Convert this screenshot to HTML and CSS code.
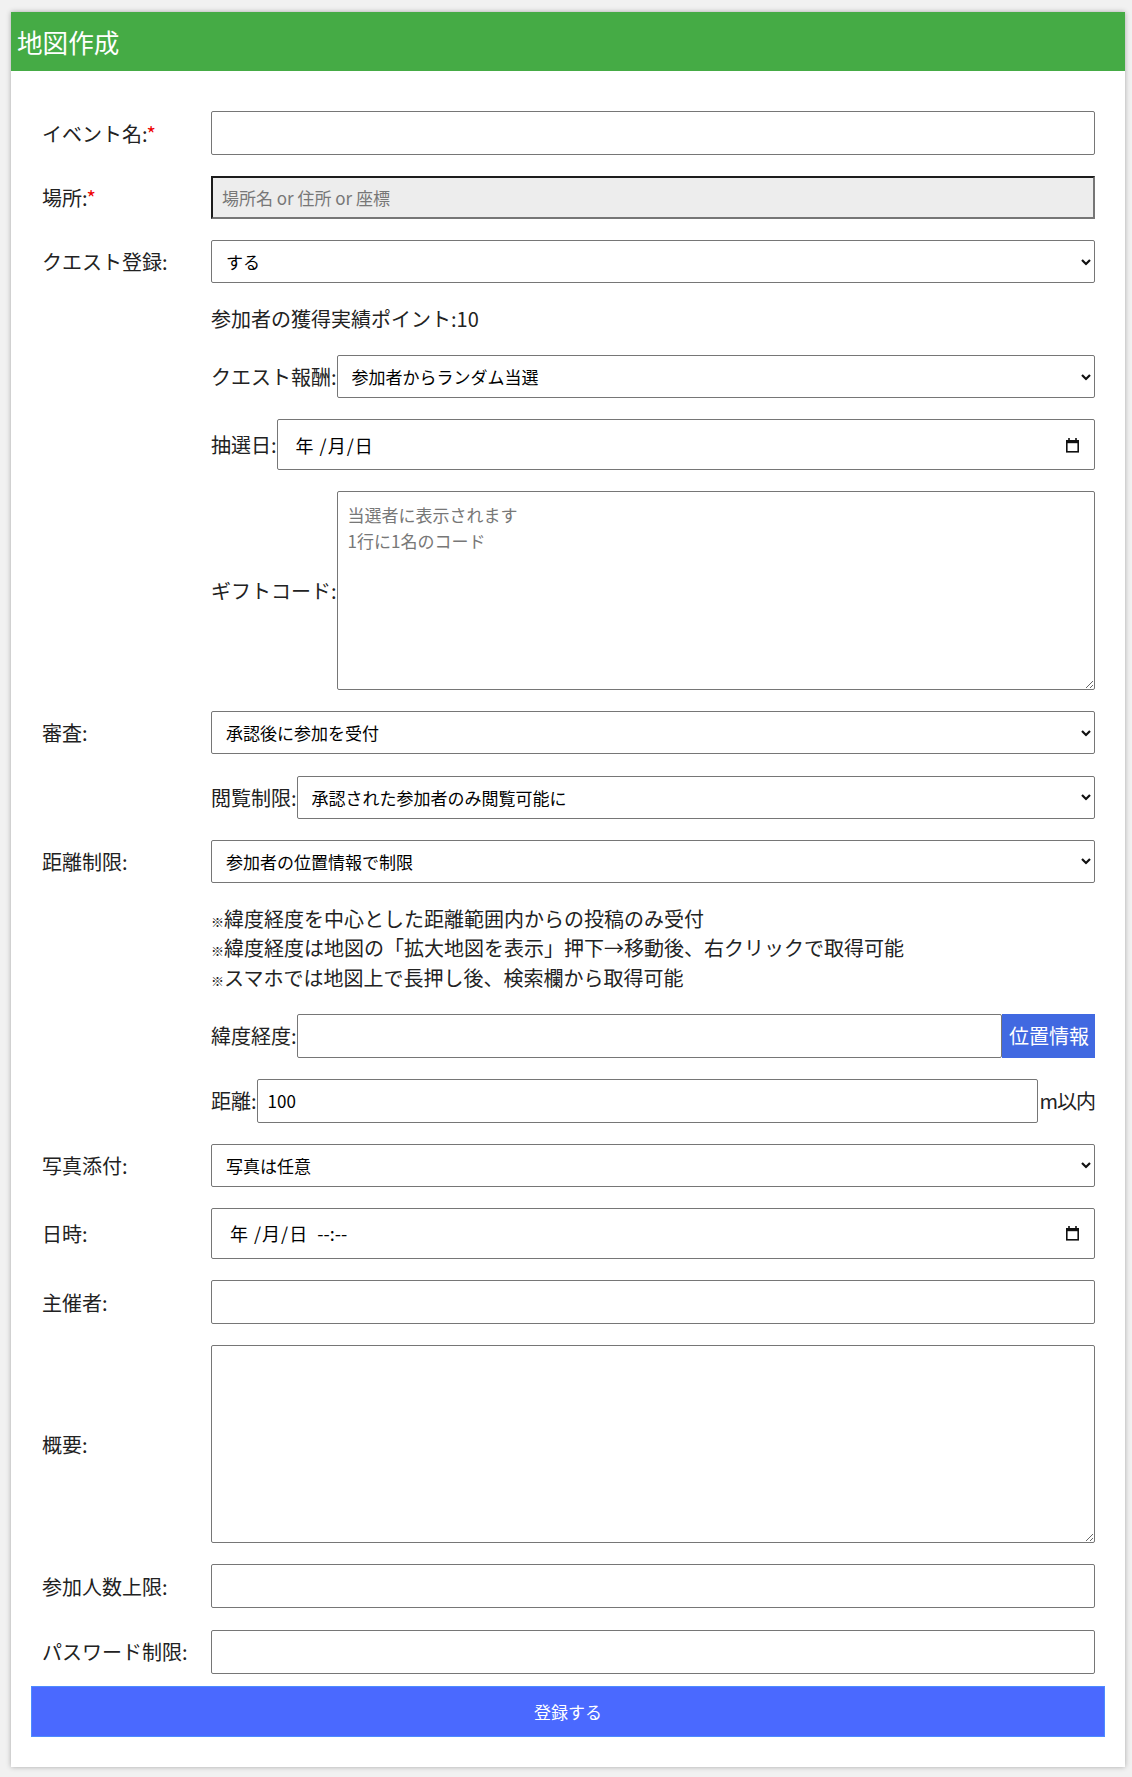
FILE: index.html
```html
<!DOCTYPE html>
<html lang="ja">
<head>
<meta charset="utf-8">
<title>地図作成</title>
<link rel="stylesheet" href="styles.css">
</head>
<body>
<div class="card">
  <header class="card-head"><h1>地図作成</h1></header>
  <form class="form">
    <div class="fields">
      <div class="row">
        <label class="lbl">イベント名:<span class="req">*</span></label>
        <input class="field" type="text">
      </div>
      <div class="row">
        <label class="lbl">場所:<span class="req">*</span></label>
        <input class="field field-inset" type="text" placeholder="場所名 or 住所 or 座標">
      </div>
      <div class="row">
        <label class="lbl">クエスト登録:</label>
        <div class="select-wrap">
          <select class="field sel"><option>する</option></select>
          <svg class="chev" width="10" height="7" viewBox="0 0 10 7"><path d="M1 1.2 L5 5.2 L9 1.2" fill="none" stroke="#111" stroke-width="2.2"/></svg>
        </div>
      </div>
      <div class="sub text">参加者の獲得実績ポイント:10</div>
      <div class="sub inline">
        <label>クエスト報酬:</label>
        <div class="select-wrap grow">
          <select class="field sel"><option>参加者からランダム当選</option></select>
          <svg class="chev" width="10" height="7" viewBox="0 0 10 7"><path d="M1 1.2 L5 5.2 L9 1.2" fill="none" stroke="#111" stroke-width="2.2"/></svg>
        </div>
      </div>
      <div class="sub inline">
        <label>抽選日:</label>
        <div class="field date grow">
          <span>年 /月/日</span>
          <svg class="cal" width="15" height="16" viewBox="0 0 15 16"><rect x="1.8" y="3.8" width="11.4" height="11" fill="none" stroke="#111" stroke-width="1.6"/><rect x="1" y="3" width="13" height="3.2" fill="#111"/><rect x="3.2" y="1" width="1.6" height="3" fill="#111"/><rect x="10.2" y="1" width="1.6" height="3" fill="#111"/></svg>
        </div>
      </div>
      <div class="sub inline">
        <label>ギフトコード:</label>
        <textarea class="field area grow" placeholder="当選者に表示されます&#10;1行に1名のコード"></textarea>
      </div>
      <div class="row">
        <label class="lbl">審査:</label>
        <div class="select-wrap">
          <select class="field sel"><option>承認後に参加を受付</option></select>
          <svg class="chev" width="10" height="7" viewBox="0 0 10 7"><path d="M1 1.2 L5 5.2 L9 1.2" fill="none" stroke="#111" stroke-width="2.2"/></svg>
        </div>
      </div>
      <div class="sub inline">
        <label>閲覧制限:</label>
        <div class="select-wrap grow">
          <select class="field sel"><option>承認された参加者のみ閲覧可能に</option></select>
          <svg class="chev" width="10" height="7" viewBox="0 0 10 7"><path d="M1 1.2 L5 5.2 L9 1.2" fill="none" stroke="#111" stroke-width="2.2"/></svg>
        </div>
      </div>
      <div class="row">
        <label class="lbl">距離制限:</label>
        <div class="select-wrap">
          <select class="field sel"><option>参加者の位置情報で制限</option></select>
          <svg class="chev" width="10" height="7" viewBox="0 0 10 7"><path d="M1 1.2 L5 5.2 L9 1.2" fill="none" stroke="#111" stroke-width="2.2"/></svg>
        </div>
      </div>
      <div class="sub text notes">
        <div><span class="kome">※</span>緯度経度を中心とした距離範囲内からの投稿のみ受付</div>
        <div><span class="kome">※</span>緯度経度は地図の「拡大地図を表示」押下→移動後、右クリックで取得可能</div>
        <div><span class="kome">※</span>スマホでは地図上で長押し後、検索欄から取得可能</div>
      </div>
      <div class="sub inline">
        <label>緯度経度:</label>
        <input class="field grow" type="text">
        <button class="loc-btn" type="button">位置情報</button>
      </div>
      <div class="sub inline">
        <label>距離:</label>
        <input class="field grow" type="text" value="100">
        <span class="unit">m以内</span>
      </div>
      <div class="row">
        <label class="lbl">写真添付:</label>
        <div class="select-wrap">
          <select class="field sel"><option>写真は任意</option></select>
          <svg class="chev" width="10" height="7" viewBox="0 0 10 7"><path d="M1 1.2 L5 5.2 L9 1.2" fill="none" stroke="#111" stroke-width="2.2"/></svg>
        </div>
      </div>
      <div class="row">
        <label class="lbl">日時:</label>
        <div class="field date">
          <span>年 /月/日 <span class="time">--:--</span></span>
          <svg class="cal" width="15" height="16" viewBox="0 0 15 16"><rect x="1.8" y="3.8" width="11.4" height="11" fill="none" stroke="#111" stroke-width="1.6"/><rect x="1" y="3" width="13" height="3.2" fill="#111"/><rect x="3.2" y="1" width="1.6" height="3" fill="#111"/><rect x="10.2" y="1" width="1.6" height="3" fill="#111"/></svg>
        </div>
      </div>
      <div class="row">
        <label class="lbl">主催者:</label>
        <input class="field" type="text">
      </div>
      <div class="row">
        <label class="lbl">概要:</label>
        <textarea class="field area area-lg"></textarea>
      </div>
      <div class="row">
        <label class="lbl">参加人数上限:</label>
        <input class="field" type="text">
      </div>
      <div class="row">
        <label class="lbl">パスワード制限:</label>
        <input class="field" type="text">
      </div>
    </div>
    <button class="submit" type="submit">登録する</button>
  </form>
</div>
</body>
</html>
```

FILE: styles.css
```css
* {
  box-sizing: border-box;
}

html,
body {
  margin: 0;
  padding: 0;
}

body {
  background: #f1f1f1;
  font-family: "Noto Sans CJK JP", "Noto Sans", sans-serif;
  color: #222;
}

.card {
  margin: 12px 7px 12px 11px;
  background: #fff;
  box-shadow: 0 0 5px rgba(0, 0, 0, 0.3);
}

.card-head {
  height: 59px;
  background: #45ab45;
  display: flex;
  align-items: center;
  padding-left: 6px;
}

.card-head h1 {
  margin: 0;
  font-size: 25.6px;
  font-weight: normal;
  color: #fff;
  line-height: 1;
}

.form {
  padding: 40px 20px 30px;
}

.fields {
  display: flex;
  flex-direction: column;
  gap: 21.15px;
  padding: 0 10px 0 11px;
}

.row {
  display: grid;
  grid-template-columns: 169px 1fr;
  align-items: center;
}

.lbl {
  font-size: 20px;
  white-space: nowrap;
}

.req {
  color: #e00;
}

.sub {
  margin-left: 169px;
}

.text {
  font-size: 20px;
  line-height: 29.5px;
}

.notes > div {
  height: 29.5px;
}

.kome {
  font-size: 13px;
  line-height: 0;
}

.inline {
  display: flex;
  align-items: center;
}

.inline > label {
  font-size: 20px;
  white-space: nowrap;
}

.grow {
  flex: 1;
  min-width: 0;
}

.field {
  display: block;
  width: 100%;
  height: 44px;
  margin: 0;
  border: 1px solid #767676;
  border-radius: 2px;
  background: #fff;
  font-family: "Noto Sans CJK JP", "Noto Sans", sans-serif;
  font-size: 17px;
  color: #000;
  padding: 0 10px;
  outline: none;
}

.field::placeholder {
  color: #777;
}

.field-inset {
  height: 43px;
  border-width: 2px;
  border-color: #1c1c1c #767676 #767676 #1c1c1c;
  border-radius: 0;
  background: #ededed;
  padding: 0 9px;
}

.select-wrap {
  position: relative;
}

.sel {
  height: 43px;
  appearance: none;
  -webkit-appearance: none;
  padding: 0 28px 0 14px;
}

.chev {
  position: absolute;
  right: 4px;
  top: 50%;
  transform: translateY(-45%);
  pointer-events: none;
}

.date {
  height: 51px;
  display: flex;
  align-items: center;
  justify-content: space-between;
  padding: 0 14px 0 18px;
  font-size: 18px;
  letter-spacing: 1px;
}

.date .time {
  margin-left: 4px;
  letter-spacing: 0;
}

.cal {
  display: block;
}

.area {
  height: 199px;
  padding: 10px 10px;
  line-height: 26px;
  resize: vertical;
}

.area-lg {
  height: 198px;
}

.loc-btn {
  height: 44px;
  margin: 0;
  border: none;
  background: #4169e1;
  color: #fff;
  font-family: "Noto Sans CJK JP", "Noto Sans", sans-serif;
  font-size: 20px;
  padding: 0 6px 0 7px;
  white-space: nowrap;
}

.unit {
  font-size: 20px;
  white-space: nowrap;
  padding-left: 1px;
  letter-spacing: -1px;
}

.submit {
  display: block;
  width: 100%;
  height: 51px;
  margin-top: 12px;
  background: #4a69ff;
  border: 1px solid #4d8bff;
  color: #fff;
  font-family: "Noto Sans CJK JP", "Noto Sans", sans-serif;
  font-size: 17px;
}
```
